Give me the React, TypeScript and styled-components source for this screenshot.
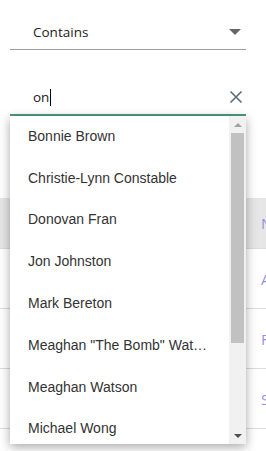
import React from 'react';
import styled, { createGlobalStyle } from 'styled-components';

const GlobalStyle = createGlobalStyle`
  html, body {
    margin: 0;
    padding: 0;
    background: #ffffff;
    overflow: hidden;
  }
  * {
    box-sizing: border-box;
  }
`;

const Page = styled.div`
  position: relative;
  width: 266px;
  height: 451px;
  overflow: hidden;
  background: #ffffff;
`;

const FilterPanel = styled.div`
  height: 198px;
  padding: 0 20px 0 10px;
`;

const SelectField = styled.div`
  height: 50px;
  padding: 14px 5px 0 23px;
  display: flex;
  align-items: center;
  justify-content: space-between;
  border-bottom: 1px solid #9e9e9e;
  font-family: "Open Sans", "Noto Sans", sans-serif;
  font-size: 13.5px;
  color: #212121;
`;

const Triangle = styled.span`
  width: 0;
  height: 0;
  border-left: 6px solid transparent;
  border-right: 6px solid transparent;
  border-top: 6px solid #666666;
`;

const InputField = styled.div`
  height: 66px;
  padding: 30px 3px 0 23px;
  display: flex;
  align-items: center;
  justify-content: space-between;
  border-bottom: 2px solid #4a9a82;
  font-family: "Open Sans", "Noto Sans", sans-serif;
  font-size: 13.5px;
  color: #212121;
`;

const InputValue = styled.span`
  display: flex;
  align-items: center;
`;

const Caret = styled.span`
  display: inline-block;
  width: 1px;
  height: 17px;
  margin-left: 1px;
  background: #000000;
`;

const Table = styled.div`
  font-family: "Open Sans", "Noto Sans", sans-serif;
  font-size: 15px;
  color: #9b8fe0;
`;

const Row = styled.div<{ $header?: boolean }>`
  display: grid;
  grid-template-columns: 245px 1fr;
  height: ${p => (p.$header ? '51px' : '60px')};
  background: ${p => (p.$header ? '#e6e6e6' : '#ffffff')};
  border-bottom: 1px solid #dcdcdc;
`;

const Cell = styled.div`
  display: flex;
  align-items: center;
  padding-left: 16px;
  white-space: nowrap;
  overflow: hidden;
`;

const Popup = styled.div`
  position: absolute;
  left: 10px;
  top: 116px;
  width: 236px;
  height: 328px;
  display: flex;
  background: #ffffff;
  box-shadow: 0 3px 10px rgba(0, 0, 0, 0.35);
  overflow: hidden;
`;

const OptionList = styled.div`
  flex: 1;
  min-width: 0;
  margin-top: -1px;
  display: flex;
  flex-direction: column;
`;

const Option = styled.div`
  flex: 0 0 41.8px;
  display: flex;
  align-items: center;
  padding: 0 16px 0 18px;
  font-family: "Liberation Sans", Arial, sans-serif;
  font-size: 14px;
  color: #333333;
  white-space: nowrap;
  overflow: hidden;
`;

const OptionText = styled.span`
  overflow: hidden;
  text-overflow: ellipsis;
`;

const ScrollTrack = styled.div`
  width: 17px;
  display: flex;
  flex-direction: column;
  background: #f1f1f1;
`;

const ScrollArrow = styled.div<{ $down?: boolean; $color: string }>`
  height: 17px;
  display: flex;
  align-items: center;
  justify-content: center;

  &::before {
    content: '';
    width: 0;
    height: 0;
    border-left: 4px solid transparent;
    border-right: 4px solid transparent;
    ${p =>
      p.$down
        ? `border-top: 4px solid ${p.$color};`
        : `border-bottom: 4px solid ${p.$color};`}
  }
`;

const ScrollThumb = styled.div`
  height: 210px;
  margin: 0 2px;
  background: #c1c1c1;
`;

const ScrollRest = styled.div`
  flex: 1;
`;

const options = [
  'Bonnie Brown',
  'Christie-Lynn Constable',
  'Donovan Fran',
  'Jon Johnston',
  'Mark Bereton',
  'Meaghan "The Bomb" Watson-Smith',
  'Meaghan Watson',
  'Michael Wong',
];

const rows = ['Name', 'Alice', 'Frank', 'Sam'];

export default function App() {
  return (
    <Page>
      <GlobalStyle />
      <FilterPanel>
        <SelectField>
          <span>Contains</span>
          <Triangle />
        </SelectField>
        <InputField>
          <InputValue>
            on
            <Caret />
          </InputValue>
          <svg width="14" height="14" viewBox="0 0 14 14">
            <path d="M1.5 1.5 L12.5 12.5 M12.5 1.5 L1.5 12.5" stroke="#5b6b7b" strokeWidth="1.6" fill="none" />
          </svg>
        </InputField>
      </FilterPanel>

      <Table>
        {rows.map((r, i) => (
          <Row key={r} $header={i === 0}>
            <Cell />
            <Cell>{r}</Cell>
          </Row>
        ))}
      </Table>

      <Popup>
        <OptionList>
          {options.map(o => (
            <Option key={o}>
              <OptionText>{o}</OptionText>
            </Option>
          ))}
        </OptionList>
        <ScrollTrack>
          <ScrollArrow $color="#a3a3a3" />
          <ScrollThumb />
          <ScrollRest />
          <ScrollArrow $down $color="#505050" />
        </ScrollTrack>
      </Popup>
    </Page>
  );
}
